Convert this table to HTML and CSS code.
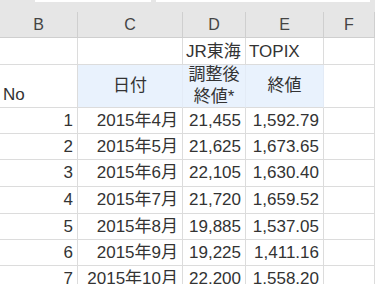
FILE: index.html
```html
<!DOCTYPE html>
<html lang="ja">
<head>
<meta charset="utf-8">
<link rel="stylesheet" href="styles.css">
</head>
<body>
<div class="topbar">
  <div class="box box-name"></div>
  <div class="box box-formula"></div>
</div>
<div class="sheet">
  <div class="cell colhead">B</div>
  <div class="cell colhead">C</div>
  <div class="cell colhead">D</div>
  <div class="cell colhead">E</div>
  <div class="cell colhead">F</div>

  <div class="cell"></div>
  <div class="cell"></div>
  <div class="cell left bottom">JR東海</div>
  <div class="cell left bottom">TOPIX</div>
  <div class="cell"></div>

  <div class="cell left bottom">No</div>
  <div class="cell hdr">日付</div>
  <div class="cell hdr two">調整後<br>終値*</div>
  <div class="cell hdr">終値</div>
  <div class="cell"></div>

  <div class="cell num">1</div><div class="cell num">2015年4月</div><div class="cell num">21,455</div><div class="cell num">1,592.79</div><div class="cell"></div>
  <div class="cell num">2</div><div class="cell num">2015年5月</div><div class="cell num">21,625</div><div class="cell num">1,673.65</div><div class="cell"></div>
  <div class="cell num">3</div><div class="cell num">2015年6月</div><div class="cell num">22,105</div><div class="cell num">1,630.40</div><div class="cell"></div>
  <div class="cell num">4</div><div class="cell num">2015年7月</div><div class="cell num">21,720</div><div class="cell num">1,659.52</div><div class="cell"></div>
  <div class="cell num">5</div><div class="cell num">2015年8月</div><div class="cell num">19,885</div><div class="cell num">1,537.05</div><div class="cell"></div>
  <div class="cell num">6</div><div class="cell num">2015年9月</div><div class="cell num">19,225</div><div class="cell num">1,411.16</div><div class="cell"></div>
  <div class="cell num">7</div><div class="cell num">2015年10月</div><div class="cell num">22,200</div><div class="cell num">1,558.20</div><div class="cell"></div>
</div>
</body>
</html>
```

FILE: styles.css
```css
* { box-sizing: border-box; }
html, body {
  margin: 0;
  padding: 0;
  background: #ffffff;
  overflow: hidden;
}
body {
  width: 375px;
  height: 284px;
  font-family: "Liberation Sans", "Noto Sans CJK JP", sans-serif;
  color: #333333;
}
.topbar {
  height: 12px;
  background: #e6e6e6;
  display: flex;
  align-items: flex-start;
  gap: 5px;
  padding-left: 35px;
}
.box {
  height: 2px;
  background: #ffffff;
  border: 0;
}
.box-name { width: 116px; }
.box-formula { width: 214px; }
.sheet {
  display: grid;
  grid-template-columns: 78px 105px 63px 78px 51px;
  grid-template-rows: 26px 27px 43px 26px 26px 27px 27px 26px 26px 26px;
}
.cell {
  border-right: 1px solid #dcdcdc;
  border-bottom: 1px solid #dcdcdc;
  font-size: 17px;
  line-height: 20px;
  display: flex;
  align-items: center;
  white-space: nowrap;
  overflow: visible;
}
.colhead {
  background: #e6e6e6;
  border-right-color: #cfcfcf;
  border-bottom-color: #cfcfcf;
  justify-content: center;
  font-size: 16px;
  color: #444444;
}
.left {
  justify-content: flex-start;
  padding-left: 3px;
}
.bottom {
  align-items: flex-end;
  padding-bottom: 2px;
}
.hdr {
  background: #e9f2fd;
  border-right-color: #e3ebf6;
  border-bottom-color: #dcdcdc;
  justify-content: center;
  text-align: center;
}
.two {
  line-height: 22px;
}
.num {
  justify-content: flex-end;
  padding-right: 4px;
}
```
